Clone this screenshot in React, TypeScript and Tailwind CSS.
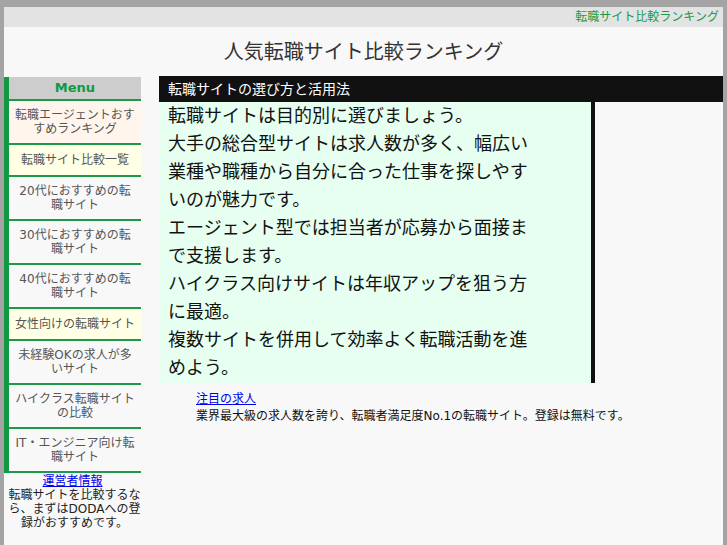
import React from "react";

const menuItems = [
  { label: "転職エージェントおすすめランキング", tall: true, bg: "bg-[#fff5ec]" },
  { label: "転職サイト比較一覧", tall: false, bg: "bg-[#ffffe6]" },
  { label: "20代におすすめの転職サイト", tall: true, bg: "" },
  { label: "30代におすすめの転職サイト", tall: true, bg: "" },
  { label: "40代におすすめの転職サイト", tall: true, bg: "" },
  { label: "女性向けの転職サイト", tall: false, bg: "bg-[#ffffe6]" },
  { label: "未経験OKの求人が多いサイト", tall: true, bg: "" },
  { label: "ハイクラス転職サイトの比較", tall: true, bg: "" },
  { label: "IT・エンジニア向け転職サイト", tall: true, bg: "" },
];

const paragraphs = [
  "転職サイトは目的別に選びましょう。",
  "大手の総合型サイトは求人数が多く、幅広い業種や職種から自分に合った仕事を探しやすいのが魅力です。",
  "エージェント型では担当者が応募から面接まで支援します。",
  "ハイクラス向けサイトは年収アップを狙う方に最適。",
  "複数サイトを併用して効率よく転職活動を進めよう。",
];

export default function App() {
  return (
    <div className="min-h-screen bg-[#f8f8f8] font-['DejaVu_Sans','Noto_Sans_CJK_JP',sans-serif]">
      <div className="min-h-screen border-x-4 border-t-[7px] border-[#a4a4a4]">
        {/* header strip */}
        <div className="flex h-[20px] items-center justify-end bg-[#e3e3e3] pr-[4px] text-[12px] leading-none text-[#1a9a46]">
          転職サイト比較ランキング
        </div>

        {/* title */}
        <div className="flex h-[49px] items-center justify-center">
          <h1 className="text-[20px] leading-none text-[#333]">人気転職サイト比較ランキング</h1>
        </div>

        <div className="flex items-start">
          {/* sidebar */}
          <aside className="w-[137px] shrink-0">
            <div className="mt-[1px] border-l-[5px] border-[#119944]">
              <div className="flex h-[22px] items-center justify-center bg-[#cdcdcd] text-[13px] font-bold text-[#119944]">
                Menu
              </div>
              {menuItems.map((item) => (
                <div
                  key={item.label}
                  className={`flex items-center justify-center border-t-2 border-[#1c9a4a] px-[5px] text-center text-[12px] leading-[14px] text-[#555] ${
                    item.tall ? "h-[44px]" : "h-[32px]"
                  } ${item.bg}`}
                >
                  {item.label}
                </div>
              ))}
              <div className="border-t-2 border-[#1c9a4a]" />
            </div>
            <div className="pt-[1px] text-center text-[12px] leading-[14px] text-[#222]">
              <a href="#" className="text-[#0000ee] underline">
                運営者情報
              </a>
              <p className="w-[141px]">転職サイトを比較するなら、まずはDODAへの登録がおすすめです。</p>
            </div>
          </aside>

          {/* main */}
          <main className="ml-[18px] flex-1">
            <div className="flex h-[26px] items-center bg-[#111] pl-[9px] text-[14px] leading-none text-white">
              転職サイトの選び方と活用法
            </div>
            <div className="flex">
              <div className="w-[436px] border-r-4 border-[#111] bg-[#e6fff0] pb-[1px] pl-[9px]">
                <div className="w-[370px] text-[18px] leading-[28px] text-[#111]">
                  {paragraphs.map((p) => (
                    <p key={p}>{p}</p>
                  ))}
                </div>
              </div>
              <div className="flex-1" />
            </div>
            <div className="pl-[37px] pt-[8px] text-[12px] leading-[17px] text-[#111]">
              <a href="#" className="text-[#0000ee] underline">
                注目の求人
              </a>
              <p>業界最大級の求人数を誇り、転職者満足度No.1の転職サイト。登録は無料です。</p>
            </div>
          </main>
        </div>
      </div>
    </div>
  );
}
